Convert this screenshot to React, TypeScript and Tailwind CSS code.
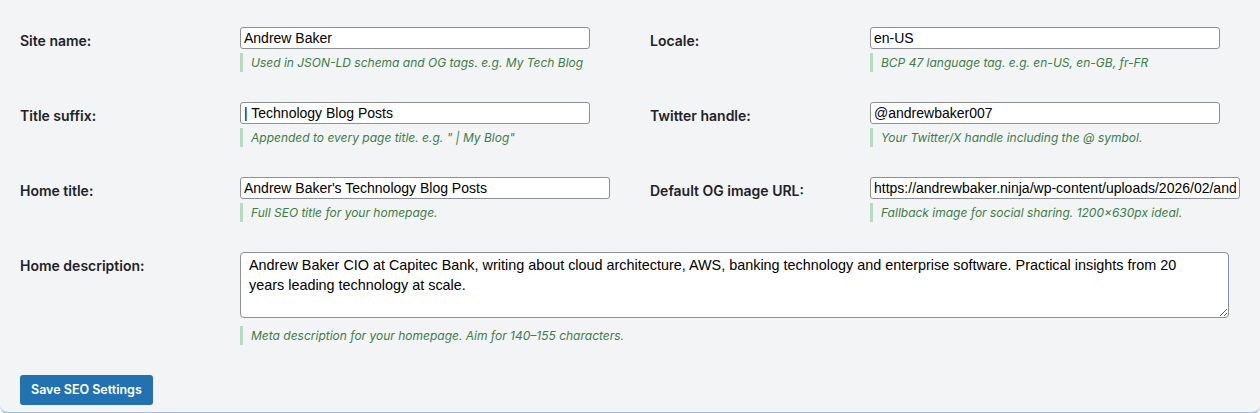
import React from "react";

const labelCls =
  "pt-[4px] text-[14px] leading-[20px] font-semibold text-[#1d2327] [font-family:Inter,'Liberation_Sans',sans-serif]";
const inputCls =
  "block h-[22px] border border-[#8c8f94] rounded-[3px] bg-white px-[3px] text-[14px] text-black outline-none [font-family:'Liberation_Sans',Arial,sans-serif]";
const hintCls =
  "flex items-center h-[19px] border-l-[3px] border-[#b6dcc0] pl-[8px] text-[12px] italic text-[#3b7d46] [font-family:Inter,'Liberation_Sans',sans-serif] whitespace-nowrap";

function Field({
  label,
  value,
  hint,
  wide,
}: {
  label: string;
  value: string;
  hint: string;
  wide?: boolean;
}) {
  return (
    <div className="grid grid-cols-[220px_1fr] pl-5 items-start">
      <div className={labelCls}>{label}</div>
      <div>
        <input
          className={`${inputCls} ${wide ? "w-[370px]" : "w-[350px]"}`}
          defaultValue={value}
        />
        <div className={`mt-[4px] ${hintCls}`}>{hint}</div>
      </div>
    </div>
  );
}

export default function App() {
  return (
    <div className="bg-white w-[1260px] h-[413px]">
      <div className="bg-[#f3f4f6] rounded-b-[8px] border-b-2 border-[#a3bfe4] pt-[27px] pb-[7px]">
        <div className="grid grid-cols-[630px_630px] gap-y-[30px]">
          <Field
            label="Site name:"
            value="Andrew Baker"
            hint="Used in JSON-LD schema and OG tags. e.g. My Tech Blog"
          />
          <Field
            label="Locale:"
            value="en-US"
            hint="BCP 47 language tag. e.g. en-US, en-GB, fr-FR"
          />
          <Field
            label="Title suffix:"
            value="| Technology Blog Posts"
            hint={'Appended to every page title. e.g. " | My Blog"'}
          />
          <Field
            label="Twitter handle:"
            value="@andrewbaker007"
            hint="Your Twitter/X handle including the @ symbol."
          />
          <Field
            label="Home title:"
            value="Andrew Baker's Technology Blog Posts"
            hint="Full SEO title for your homepage."
            wide
          />
          <Field
            label="Default OG image URL:"
            value="https://andrewbaker.ninja/wp-content/uploads/2026/02/andrew-baker-og-image.jpg"
            hint="Fallback image for social sharing. 1200×630px ideal."
            wide
          />
        </div>

        <div className="mt-[30px] grid grid-cols-[220px_1fr] pl-5 items-start">
          <div className={labelCls}>Home description:</div>
          <div>
            <textarea
              rows={3}
              className="block w-[989px] h-[66px] border border-[#8c8f94] rounded-[4px] bg-white px-[8px] py-[2px] text-[14.4px] leading-[20px] text-black outline-none [font-family:'Liberation_Sans',Arial,sans-serif]"
              defaultValue={
                "Andrew Baker CIO at Capitec Bank, writing about cloud architecture, AWS, banking technology and enterprise software. Practical insights from 20\nyears leading technology at scale."
              }
            />
            <div className={`mt-[8px] ${hintCls}`}>
              Meta description for your homepage. Aim for 140–155 characters.
            </div>
          </div>
        </div>

        <div className="mt-[30px] pl-5">
          <button className="h-[30px] px-[11px] rounded-[3px] bg-[#2271b1] text-white text-[12.5px] font-semibold [font-family:Inter,'Liberation_Sans',sans-serif]">
            Save SEO Settings
          </button>
        </div>
      </div>
    </div>
  );
}
